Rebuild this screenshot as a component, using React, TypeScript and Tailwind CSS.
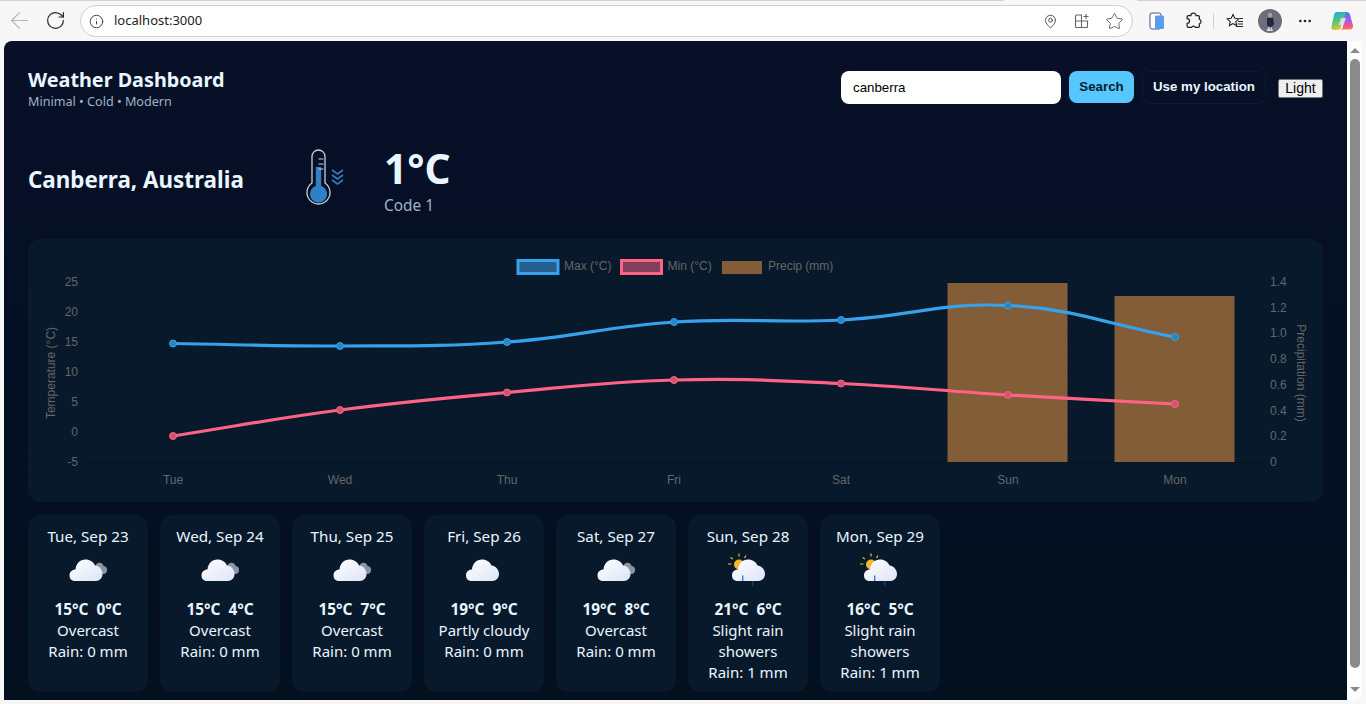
import { ArrowLeft, RotateCw, Info, MapPin, Star, MoreHorizontal } from 'lucide-react';

const uiFont = "font-['Noto_Sans',sans-serif]";
const armFont = "font-['Liberation_Sans',Arial,sans-serif]";

type Pt = [number, number];

const days = ['Tue', 'Wed', 'Thu', 'Fri', 'Sat', 'Sun', 'Mon'];
const xs = [173, 340, 507, 674, 841, 1008, 1175];
const maxY = [343.5, 346, 342, 322, 320, 305.5, 337];
const minY = [436, 410, 392.5, 380, 383.5, 395, 404];

const forecast = [
  { date: 'Tue, Sep 23', temps: '15°C  0°C', label: 'Overcast', rain: 'Rain: 0 mm', icon: 'overcast' },
  { date: 'Wed, Sep 24', temps: '15°C  4°C', label: 'Overcast', rain: 'Rain: 0 mm', icon: 'overcast' },
  { date: 'Thu, Sep 25', temps: '15°C  7°C', label: 'Overcast', rain: 'Rain: 0 mm', icon: 'overcast' },
  { date: 'Fri, Sep 26', temps: '19°C  9°C', label: 'Partly cloudy', rain: 'Rain: 0 mm', icon: 'cloud' },
  { date: 'Sat, Sep 27', temps: '19°C  8°C', label: 'Overcast', rain: 'Rain: 0 mm', icon: 'overcast' },
  { date: 'Sun, Sep 28', temps: '21°C  6°C', label: 'Slight rain showers', rain: 'Rain: 1 mm', icon: 'showers' },
  { date: 'Mon, Sep 29', temps: '16°C  5°C', label: 'Slight rain showers', rain: 'Rain: 1 mm', icon: 'showers' },
];

// same maths as a chart.js line with tension 0.4
function curve(points: Pt[], t = 0.4) {
  const dist = (a: Pt, b: Pt) => Math.hypot(a[0] - b[0], a[1] - b[1]);
  const ctrl = points.map((p, i) => {
    const prev = points[i - 1] ?? p;
    const next = points[i + 1] ?? p;
    const d1 = dist(prev, p);
    const d2 = dist(p, next);
    const s1 = d1 / (d1 + d2);
    const s2 = d2 / (d1 + d2);
    return {
      before: [p[0] - t * s1 * (next[0] - prev[0]), p[1] - t * s1 * (next[1] - prev[1])],
      after: [p[0] + t * s2 * (next[0] - prev[0]), p[1] + t * s2 * (next[1] - prev[1])],
    };
  });
  let d = `M${points[0][0]} ${points[0][1]}`;
  for (let i = 1; i < points.length; i++) {
    d += ` C${ctrl[i - 1].after[0]} ${ctrl[i - 1].after[1]} ${ctrl[i].before[0]} ${ctrl[i].before[1]} ${points[i][0]} ${points[i][1]}`;
  }
  return d;
}

function WeatherIcon({ kind }: { kind: string }) {
  const shift = kind === 'showers' ? 'translate(2.5 0)' : kind === 'cloud' ? 'translate(0.5 0)' : '';
  return (
    <svg width="44" height="36" viewBox="0 0 44 36" className="block">
      <defs>
        <linearGradient id="cloudFill" x1="0" y1="0" x2="1" y2="1">
          <stop offset="0" stopColor="#ffffff" />
          <stop offset="1" stopColor="#dce4f6" />
        </linearGradient>
      </defs>
      {kind === 'overcast' && (
        <g>
          <circle cx="33.500" cy="15" r="4.200" fill="#8d94a3" />
          <circle cx="37" cy="18" r="4" fill="#8d94a3" />
          <circle cx="31" cy="18" r="4" fill="#a5abb8" />
        </g>
      )}
      {kind === 'showers' && (
        <g>
          <circle cx="13" cy="12.500" r="5" fill="#f5b52c" />
          <g stroke="#f5b52c" strokeWidth="1.200">
            <path d="M13 4.500V1.500M7 7L4.500 5.500M5.500 12H2M18.500 6l1.500-2.500" />
          </g>
        </g>
      )}
      <path
        transform={shift}
        d="M9 29 C5.500 29 3.500 26.500 3.500 23.500 C3.500 20 6 17.500 9.500 17.500 C10 11.500 14 7.500 19.500 7.500 C24 7.500 27.500 10 29 13.500 C33.500 14 36.500 18 36.500 22 C36.500 26 33.500 29 30 29 Z"
        fill="url(#cloudFill)"
      />
      {kind === 'showers' && (
        <g strokeWidth="1.300">
          <path d="M16.700 23.500v5.500" stroke="#2470dc" />
          <path d="M26.700 29v5" stroke="#143f78" />
        </g>
      )}
    </svg>
  );
}

function Thermometer() {
  return (
    <svg width="44" height="60" viewBox="0 0 44 60" className="block">
      <path
        d="M11 7.500 a6.500 6.500 0 0 1 13 0 V34 a11.500 11.500 0 1 1 -13 0 Z"
        fill="none"
        stroke="#c6d0dc"
        strokeWidth="1.300"
      />
      <path d="M14.800 18 h5.400 V37 a8.500 8.500 0 1 1 -5.400 0 Z" fill="#2f80c4" />
      <path d="M17.500 10h5M17.500 15h5M17.500 20h5" stroke="#c6d0dc" strokeWidth="1.200" />
      <g fill="none" stroke="#2f80c4" strokeWidth="1.600">
        <path d="M31 21l5.500 4 5.500-4M31 26l5.500 4 5.500-4M31 31l5.500 4 5.500-4" />
      </g>
    </svg>
  );
}

function Chart() {
  const ox = -28;
  const oy = -239;
  const gridV = [90, 256.7, 423.4, 590.1, 756.8, 923.5, 1090.2, 1257];
  const leftTicks = ['25', '20', '15', '10', '5', '0', '-5'];
  const rightTicks = ['1.4', '1.2', '1.0', '0.8', '0.6', '0.4', '0.2', '0'];
  const grid = '#071828';
  const tick = '#666666';
  return (
    <svg width="1295" height="263" viewBox="0 0 1295 263" className="block" fontFamily="'Liberation Sans', Arial, sans-serif">
      <g transform={`translate(${ox} ${oy})`}>
        {/* grid */}
        {gridV.map((x) => (
          <line key={x} x1={x} x2={x} y1="282" y2="468" stroke={grid} />
        ))}
        {leftTicks.map((_, i) => (
          <line key={i} x1="84" x2="1257" y1={282 + i * 30} y2={282 + i * 30} stroke={grid} />
        ))}
        {rightTicks.map((_, i) => (
          <line key={i} x1="90" x2="1263" y1={282 + i * 25.7} y2={282 + i * 25.7} stroke={grid} />
        ))}
        <line x1="84" x2="1263" y1="462.5" y2="462.5" stroke="#061420" />

        {/* bars */}
        <rect x="947.5" y="283" width="120" height="179" fill="#835d37" />
        <rect x="1114.5" y="296" width="120" height="166" fill="#835d37" />

        {/* lines */}
        <path d={curve(xs.map((x, i) => [x, maxY[i]] as Pt))} fill="none" stroke="#36a2eb" strokeWidth="3.2" />
        <path d={curve(xs.map((x, i) => [x, minY[i]] as Pt))} fill="none" stroke="#ff6384" strokeWidth="3.2" />
        {xs.map((x, i) => (
          <g key={x}>
            <circle cx={x} cy={maxY[i]} r="3.5" fill="#2b84c2" stroke="#36a2eb" />
            <circle cx={x} cy={minY[i]} r="3.5" fill="#d35270" stroke="#ff6384" />
          </g>
        ))}

        {/* axis text */}
        <g fontSize="12" fill={tick}>
          {leftTicks.map((t, i) => (
            <text key={t} x="78" y={286 + i * 30} textAnchor="end">{t}</text>
          ))}
          {rightTicks.map((t, i) => (
            <text key={t} x="1270" y={286 + i * 25.7}>{t}</text>
          ))}
          {days.map((d, i) => (
            <text key={d} x={xs[i]} y="484" textAnchor="middle">{d}</text>
          ))}
          <text transform="translate(55 373) rotate(-90)" textAnchor="middle">Temperature (°C)</text>
          <text transform="translate(1297 373) rotate(90)" textAnchor="middle">Precipitation (mm)</text>
          <text x="564" y="270">Max (°C)</text>
          <text x="667.5" y="270">Min (°C)</text>
          <text x="768" y="270">Precip (mm)</text>
        </g>

        {/* legend */}
        <rect x="518" y="260.500" width="40" height="13" fill="#265f8d" stroke="#36a2eb" strokeWidth="3" />
        <rect x="621.500" y="260.500" width="40" height="13" fill="#813f5c" stroke="#ff6384" strokeWidth="3" />
        <rect x="722" y="261" width="40" height="13" fill="#835d37" />
      </g>
    </svg>
  );
}

function BrowserBar() {
  return (
    <div className="h-[41px] bg-[#f7f7f7] relative flex items-center">
      <div className="absolute top-0 left-0 w-[1004px] h-[1px] bg-[#d2d2d2]" />
      <div className="absolute top-0 left-[1137px] right-0 h-[1px] bg-[#d2d2d2]" />
      <div className="w-[80px] flex items-center shrink-0">
        <ArrowLeft className="w-[27px] h-[27px] ml-[6px] text-[#b4b4b4]" strokeWidth={1} />
        <RotateCw className="w-[21px] h-[21px] ml-[12px] text-[#2a2a2a]" strokeWidth={1.4} />
      </div>
      <div className="w-[1053px] h-[32px] mt-[1px] rounded-full border border-[#cfcfcf] bg-white flex items-center shrink-0">
        <Info className="w-[15px] h-[15px] ml-[8px] text-[#444]" strokeWidth={1.6} />
        <span className={`ml-[10px] text-[13px] text-[#222] ${uiFont}`}>localhost:3000</span>
        <div className="ml-auto flex items-center mr-[8px] text-[#555]">
          <MapPin className="w-[15px] h-[15px]" strokeWidth={1.6} />
          <svg width="16" height="16" viewBox="0 0 16 16" fill="none" stroke="#666" strokeWidth="1.1" className="ml-[16px]">
            <path d="M8 2H2.500a1 1 0 0 0-1 1v10.500a1 1 0 0 0 1 1h10a1 1 0 0 0 1-1V8H1.500M7.500 2v12.500M12 1v5M9.500 3.500h5" />
          </svg>
          <Star className="w-[19px] h-[19px] ml-[15px]" strokeWidth={1.1} />
        </div>
      </div>
      <div className="flex items-center ml-[16px] shrink-0">
        <svg width="16" height="18" viewBox="0 0 16 18" className="block">
          <rect x="1" y="1" width="11" height="16" rx="2" fill="#fff" stroke="#44557a" />
          <rect x="6" y="3.500" width="9" height="13.500" rx="1.500" fill="#5c9bf2" />
        </svg>
        <svg width="17" height="17" viewBox="0 0 16 16" fill="none" stroke="#222" strokeWidth="1.150" className="ml-[20px]">
          <path d="M5.500 3.500a2.500 2.500 0 0 1 5 0h2a1 1 0 0 1 1 1v2.300a2.300 2.300 0 0 1 0 4.400v2.300a1 1 0 0 1-1 1H9.800a2 2 0 0 0-3.600 0H3a1 1 0 0 1-1-1v-2.700a2.200 2.200 0 0 0 0-4.600V4.500a1 1 0 0 1 1-1Z" />
        </svg>
        <div className="w-[1px] h-[16px] bg-[#d0d0d0] ml-[11px]" />
        <svg width="18" height="16" viewBox="0 0 18 16" fill="none" stroke="#222" strokeWidth="1.1" className="ml-[12px]">
          <path d="M7 1.500l1.800 3.800 4 .5-3 2.800.8 4L7 10.600l-3.600 2 .8-4-3-2.800 4-.5ZM12 8.500h5M11.500 11h5.500M10 13.500h7M13.500 5.500h3.500" />
        </svg>
        <div className="w-[24px] h-[24px] rounded-full bg-[#6c6e80] ml-[14px] flex items-center justify-center overflow-hidden">
          <svg width="12" height="20" viewBox="0 0 12 20">
            <circle cx="6" cy="4" r="2.200" fill="#c49a80" />
            <path d="M3 7h6l1 6-2 3H4l-1-3Z" fill="#1e2640" />
            <path d="M5 15l1.500 5H2.500ZM7 15l2 5H6.500Z" fill="#ddd" />
          </svg>
        </div>
        <MoreHorizontal className="w-[16px] h-[16px] ml-[15px] text-[#222]" strokeWidth={2} />
        <svg width="24" height="24" viewBox="0 0 24 24" className="ml-[17px]">
          <defs>
            <linearGradient id="copilotA" x1="0.2" y1="0" x2="0.5" y2="1">
              <stop offset="0" stopColor="#22a5e8" />
              <stop offset="0.55" stopColor="#5cc86a" />
              <stop offset="1" stopColor="#f7c22e" />
            </linearGradient>
            <linearGradient id="copilotB" x1="0.5" y1="0" x2="0.6" y2="1">
              <stop offset="0" stopColor="#3a78ee" />
              <stop offset="0.45" stopColor="#a25cec" />
              <stop offset="0.8" stopColor="#f0588c" />
              <stop offset="1" stopColor="#f7803c" />
            </linearGradient>
          </defs>
          <path d="M14 3h2.500c1.800 0 3 1 3.500 2.500l3 11c.5 2-1 4-3 4h-10c1.500 0 2.500-1 3-2.500Z" fill="url(#copilotB)" />
          <path d="M7 3h7.500c1 0 1.500.5 1.300 1.500L11 18.500c-.5 1.500-1.500 2.500-3 2.500H4c-2 0-3-1.500-2.500-3.500L4 6C4.500 4 5.500 3 7 3Z" fill="url(#copilotA)" />
          <path d="M11 9h5l-2.500 7h-4.500Z" fill="#dbe8ff" opacity="0.85" />
        </svg>
      </div>
    </div>
  );
}

function ForecastCard({ day }: { day: (typeof forecast)[number] }) {
  return (
    <div className="w-[120px] h-[177px] rounded-xl bg-[#08192b] pt-[11px] flex flex-col items-center text-center">
      <div className="text-[15.200px] leading-[21px] text-[#eaf6ff]">{day.date}</div>
      <div className="mt-[5px] h-[36px]">
        <WeatherIcon kind={day.icon} />
      </div>
      <div className="mt-[11px] text-[15.400px] leading-[21px] font-bold text-[#eaf6ff] whitespace-pre">{day.temps}</div>
      <div className="text-[15px] leading-[21px] text-[#eaf6ff] w-[96px]">{day.label}</div>
      <div className="text-[15px] leading-[21px] text-[#eaf6ff]">{day.rain}</div>
    </div>
  );
}

export default function App() {
  return (
    <div className={`w-[1366px] h-[704px] overflow-hidden bg-[#f7f7f7] ${uiFont}`}>
      <BrowserBar />
      <div className="flex h-[659px]">
        <main className="ml-[4px] w-[1343px] h-[659px] rounded-tl-lg overflow-hidden bg-gradient-to-b from-[#071027] via-[#050f23] to-[#03101e] px-[24px] pt-[24px]">
          <header className="flex items-center justify-between h-[48px]">
            <div>
              <h1 className="-mt-[1px] text-[19.800px] leading-[25px] font-bold text-[#eaf6ff]">Weather Dashboard</h1>
              <p className="mt-[2px] text-[12.600px] leading-[16px] text-[#9fb3c8]">Minimal • Cold • Modern</p>
            </div>
            <div className={`flex items-center -mt-[4px] ${armFont}`}>
              <input
                readOnly
                value="canberra"
                className="w-[220px] h-[33px] rounded-lg bg-white px-[12px] text-[13.300px] text-black outline-none"
              />
              <button className="ml-[8px] w-[65px] h-[32px] rounded-lg bg-[#56c8ff] text-[13.300px] font-bold text-[#04202f]">Search</button>
              <button className="ml-[8px] w-[124px] h-[33px] rounded-lg border border-[#0d1a30] text-[13.300px] font-bold text-[#eaf6ff]">Use my location</button>
              <button className="ml-[12px] mt-[2px] w-[45px] h-[19px] rounded-[2px] border border-[#767676] bg-[#efefef] text-[14px] leading-[15px] text-black">Light</button>
            </div>
          </header>

          <section className="flex items-center h-[126px]">
            <h2 className="w-[272.500px] mt-[8px] text-[22.400px] font-bold text-[#eaf6ff]">Canberra, Australia</h2>
            <div className="mt-[6px]">
              <Thermometer />
            </div>
            <div className="ml-[39.500px] mt-[8px]">
              <div className="text-[40.600px] leading-[50px] font-bold text-[#eaf6ff]">1°C</div>
              <div className="mt-[2px] text-[15.400px] leading-[20px] text-[#9fb3c8]">Code 1</div>
            </div>
          </section>

          <section className="rounded-xl bg-[#08192b] h-[263px] overflow-hidden">
            <Chart />
          </section>

          <section className="flex gap-[12px] mt-[13px]">
            {forecast.map((d) => (
              <ForecastCard key={d.date} day={d} />
            ))}
          </section>
        </main>
        <div className="w-[15px] bg-white rounded-br-lg">
          <div className="ml-[3px] mt-[7px] w-0 h-0 border-x-[5px] border-x-transparent border-b-[5px] border-b-[#8b8b8b]" />
          <div className="ml-[3px] mt-[6px] w-[10px] h-[609px] rounded-full bg-[#8b8b8b]" />
          <div className="ml-[3px] mt-[19px] w-0 h-0 border-x-[5px] border-x-transparent border-t-[5px] border-t-[#8b8b8b]" />
        </div>
      </div>
    </div>
  );
}
